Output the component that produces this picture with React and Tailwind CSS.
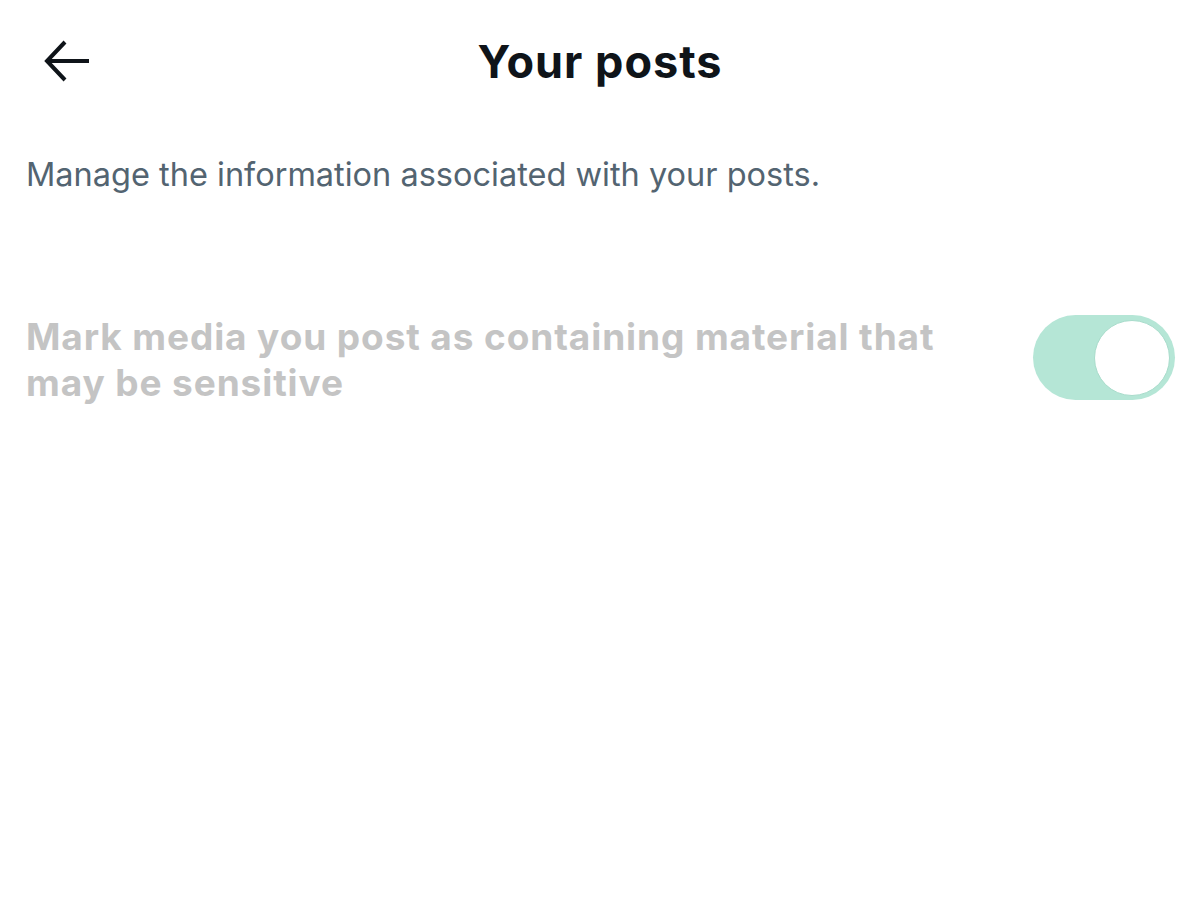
import { useState } from "react";

export default function App() {
  const [sensitive, setSensitive] = useState(true);

  return (
    <div className="w-[1200px] h-[924px] bg-white overflow-hidden" style={{ fontFamily: "Inter, 'Liberation Sans', sans-serif" }}>
      {/* Header */}
      <header className="h-[124px] flex items-center px-[42px] relative">
        <button className="w-[50px] h-[50px] flex items-center justify-center -mt-[2px]">
          <svg width="48" height="42" viewBox="0 0 48 42" fill="none" stroke="#0f1419" strokeWidth="4">
            <path d="M46 21H5" />
            <path d="M22 2L4 21l18 19" />
          </svg>
        </button>
        <h1 className="flex-1 text-center text-[45px] font-bold tracking-[1px] text-[#0f1419] -ml-[50px]">
          Your posts
        </h1>
      </header>

      {/* Description */}
      <p className="px-[26px] text-[32.5px] text-[#536471] mt-[31px] leading-[40px]">
        Manage the information associated with your posts.
      </p>

      {/* Setting row */}
      <div className="flex items-start justify-between pl-[26px] pr-[25px] mt-[119px]">
        <div className="w-[950px] text-[37px] font-bold tracking-[0.9px] leading-[46px] text-[#c4c4c4]">
          Mark media you post as containing material that may be sensitive
        </div>
        <button
          onClick={() => setSensitive(!sensitive)}
          className="w-[142px] h-[85px] rounded-full bg-[#b5e6d6] p-[5px] flex items-center justify-end mt-[1px]"
        >
          <span className="w-[76px] h-[76px] rounded-full bg-white border border-[#a8dccb]" />
        </button>
      </div>
    </div>
  );
}
